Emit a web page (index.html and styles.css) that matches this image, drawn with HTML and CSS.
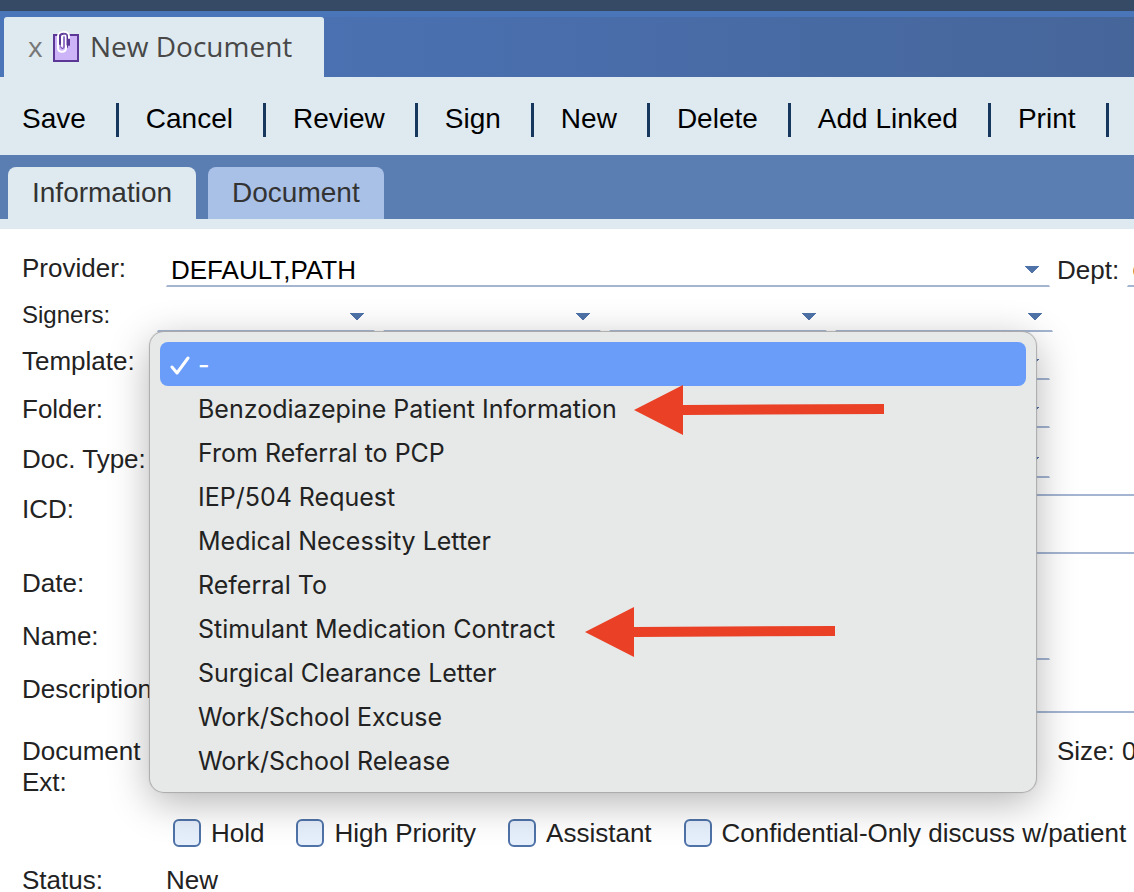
FILE: index.html
```
<!DOCTYPE html>
<html lang="en">
  <head>
    <meta charset="utf-8">
    <title>New Document</title>
    <link rel="stylesheet" href="styles.css">
  </head>
  <body>
    <header class="topbar">
      <div class="window-tab">
        <button class="close" aria-label="Close tab">x</button>
        <svg class="clip-icon" width="28" height="34" viewBox="0 0 28 34">
          <rect x="2" y="6" width="24" height="26" fill="#cdb3f8" stroke="#5b3796" stroke-width="2"/>
          <g fill="none" stroke-linecap="round">
            <path d="M8 15V7c0-4 7-4 7 0v11M17 16V8" stroke="#5b3796" stroke-width="2"/>
            <path d="M12 8v10c0 2-3 2-3 0V9" stroke="#5b3796" stroke-width="1"/>
            <path d="M6 9v10c0 5 8 5 8 0V8c0-3-4-3-4 0v9" stroke="#fff" stroke-width="2"/>
            <path d="M6 9V7c0-5 11-6 11 0v2" stroke="#fff" stroke-width="2"/>
            <path d="M8 10V8c0-3 7-4 7-1v9" stroke="#5b3796" stroke-width="1"/>
          </g>
        </svg>
        <span>New Document</span>
      </div>
    </header>

    <nav class="toolbar">
      <button>Save</button>
      <button>Cancel</button>
      <button>Review</button>
      <button>Sign</button>
      <button>New</button>
      <button>Delete</button>
      <button>Add Linked</button>
      <button>Print</button>
    </nav>

    <div class="tabs">
      <button class="tab active">Information</button>
      <button class="tab">Document</button>
    </div>

    <form class="form">
      <div class="row">
        <label for="provider">Provider:</label>
        <select id="provider"><option>DEFAULT,PATH</option></select>
        <div class="side">
          <label for="dept">Dept:</label>
          <select id="dept"><option>CLINIC</option></select>
        </div>
      </div>

      <div class="row signer-row">
        <label for="signer1">Signers:</label>
        <div class="signers">
          <select id="signer1"></select>
          <select aria-label="Signer 2"></select>
          <select aria-label="Signer 3"></select>
          <select aria-label="Signer 4"></select>
        </div>
      </div>

      <div class="row">
        <label for="template">Template:</label>
        <div class="field">
          <select id="template"></select>
          <!-- open template list -->
          <div class="menu">
            <button type="button" class="option selected">
              <svg class="check" width="20" height="20" viewBox="0 0 20 20">
                <path d="M2 12l5 6L18 3" fill="none" stroke="#fff" stroke-width="3" stroke-linecap="round" stroke-linejoin="round"/>
              </svg>
              -
            </button>
            <button type="button" class="option">
              Benzodiazepine Patient Information
              <svg class="arrow arrow-far" width="250" height="50" viewBox="0 0 250 50">
                <path d="M0 25L49 0v20L250 19v10L49 30v20z" fill="#ea4126"/>
              </svg>
            </button>
            <button type="button" class="option">From Referral to PCP</button>
            <button type="button" class="option">IEP/504 Request</button>
            <button type="button" class="option">Medical Necessity Letter</button>
            <button type="button" class="option">Referral To</button>
            <button type="button" class="option">
              Stimulant Medication Contract
              <svg class="arrow arrow-near" width="250" height="50" viewBox="0 0 250 50">
                <path d="M0 25L49 0v20L250 19v10L49 30v20z" fill="#ea4126"/>
              </svg>
            </button>
            <button type="button" class="option">Surgical Clearance Letter</button>
            <button type="button" class="option">Work/School Excuse</button>
            <button type="button" class="option">Work/School Release</button>
          </div>
        </div>
      </div>

      <div class="row">
        <label for="folder">Folder:</label>
        <select id="folder"></select>
      </div>

      <div class="row doc-row">
        <label for="doctype">Doc. Type:</label>
        <select id="doctype"></select>
      </div>

      <div class="row">
        <label for="icd">ICD:</label>
        <textarea id="icd" class="wide"></textarea>
      </div>

      <div class="row">
        <label for="date">Date:</label>
        <input id="date" class="plain" type="text">
      </div>

      <div class="row name-row">
        <label for="name">Name:</label>
        <input id="name" type="text">
      </div>

      <div class="row">
        <label for="description">Description:</label>
        <textarea id="description" class="wide"></textarea>
      </div>

      <div class="row ext-row">
        <label for="ext">Document Ext:</label>
        <input id="ext" class="plain" type="text">
        <span class="side">Size: 0</span>
      </div>

      <div class="row checks-row">
        <div class="checks">
          <label><input type="checkbox">Hold</label>
          <label><input type="checkbox">High Priority</label>
          <label><input type="checkbox">Assistant</label>
          <label><input type="checkbox">Confidential-Only discuss w/patient</label>
        </div>
      </div>

      <div class="row status-row">
        <span>Status:</span>
        <span>New</span>
      </div>
    </form>
  </body>
</html>
```
FILE: styles.css
```
* {
    box-sizing: border-box;
}

body {
    margin: 0;
    height: 100vh;
    overflow: hidden;
    background: #fff;
    color: #222;
    font-family: "Liberation Sans", Arial, sans-serif;
    font-size: 26px;
}

button,
input,
select,
textarea {
    margin: 0;
    padding: 0;
    border: 0;
    background: none;
    color: inherit;
    font: inherit;
}

/* window tab */
.topbar {
    height: 77px;
    padding: 6px 4px 0;
    border-top: 11px solid #364a66;
    background: linear-gradient(#4b75b9 6px, transparent 6px), linear-gradient(to right, #4b75b9, #4a6fae 40%, #46669a);
}

.window-tab {
    display: flex;
    align-items: center;
    width: 320px;
    height: 60px;
    padding: 0 0 2px 24px;
    border-radius: 3px 3px 0 0;
    background: #dfeaf0;
    color: #484848;
    font-family: "Open Sans", sans-serif;
    font-size: 28px;
}

.close {
    width: 14px;
    color: #777;
}

.clip-icon {
    margin: 0 10px;
}

/* actions */
.toolbar {
    display: flex;
    align-items: center;
    height: 78px;
    padding: 8px 0 0 22px;
    background: #dfeaf0;
}

.toolbar button {
    height: 34px;
    margin-right: 27px;
    padding: 0 30px 2px 0;
    border-right: 3px solid #17375e;
    color: #000;
    font-size: 28px;
    line-height: 32px;
    white-space: nowrap;
}

.tabs {
    display: flex;
    gap: 12px;
    height: 74px;
    padding: 12px 8px 0;
    border-bottom: 10px solid #dfeaf0;
    background: #5a7db2;
}

.tab {
    padding: 0 24px;
    border-radius: 8px 8px 0 0;
    background: #a9c0e7;
    color: #333;
    font-size: 28px;
}

.tab.active {
    background: #dfeaf0;
}

/* form */
.form {
    padding: 24px 0 0 22px;
}

.row {
    display: grid;
    grid-template-columns: 144px 1fr 84px;
    margin-bottom: 14px;
    line-height: 30px;
}

.row:first-child {
    margin-bottom: 11px;
}

select,
input[type=text],
textarea {
    display: block;
    width: 100%;
    height: 34px;
    border: 1px solid transparent;
    border-bottom: 2px solid #a4b5d2;
    border-radius: 0;
    resize: none;
}

select {
    appearance: none;
    padding-left: 4px;
    color: #000;
    background-image: linear-gradient(to top right, transparent 50%, #4f73a8 50%), linear-gradient(to top left, transparent 50%, #4f73a8 50%);
    background-position: right 17px top 12px, right 10px top 12px;
    background-size: 7px 8px;
    background-repeat: no-repeat;
}

.side {
    display: flex;
    padding-left: 7px;
    line-height: 34px;
    white-space: nowrap;
    overflow: hidden;
}

.side select {
    flex: 1;
    min-width: 0;
    margin-left: 8px;
    border-right: 0;
}

.signer-row {
    font-size: 24px;
    line-height: 34px;
}

.signers {
    display: flex;
    gap: 8px;
    margin: 0 -3px 0 -9px;
}

.signers select {
    background-position: right 17px top 14px, right 10px top 14px;
}

.side select {
    background-image: none;
}

.field {
    position: relative;
}

.menu {
    position: absolute;
    top: -14px;
    left: -16px;
    right: 14px;
    z-index: 1;
    padding: 10px;
    border-radius: 14px;
    background: #e6e9e8;
    box-shadow: 0 0 1px 1px #aaa, 0 10px 40px rgba(0, 0, 0, .3);
    font-family: Inter, sans-serif;
    font-size: 25px;
}

.option {
    display: block;
    position: relative;
    width: 100%;
    height: 44px;
    padding: 2px 0 0 38px;
    border-radius: 8px;
    text-align: left;
}

.option.selected {
    background: #699df9;
    color: #fff;
    font-weight: 500;
}

.check {
    position: absolute;
    top: 13px;
    left: 10px;
}

.arrow {
    position: absolute;
}

.arrow-far {
    top: -1px;
    left: 474px;
}

.arrow-near {
    top: 1px;
    left: 425px;
}

.doc-row,
.row:has(+ .doc-row) {
    margin-bottom: 16px;
}

.wide {
    grid-column: 2 / 4;
}

textarea.wide {
    border-right: 0;
}

#icd {
    height: 60px;
    border-top: 2px solid #a4b5d2;
}

.name-row {
    margin-top: 19px;
}

.name-row input,
#description {
    height: 39px;
}

input.plain {
    border-color: transparent;
}

.ext-row {
    margin: 23px 0 20px;
    line-height: 31px;
}

.ext-row .side {
    line-height: 30px;
}

.checks-row {
    margin-bottom: 20px;
}

.checks {
    display: flex;
    gap: 32px;
    grid-column: 2 / 4;
    padding-left: 7px;
    white-space: nowrap;
}

.checks label {
    display: flex;
    align-items: center;
    gap: 10px;
}

.checks input {
    appearance: none;
    width: 28px;
    height: 28px;
    border: 2px solid #4f73a8;
    border-radius: 6px;
    background: #e6effc;
}

.status-row {
    margin: 0;
    line-height: 24px;
}
```
